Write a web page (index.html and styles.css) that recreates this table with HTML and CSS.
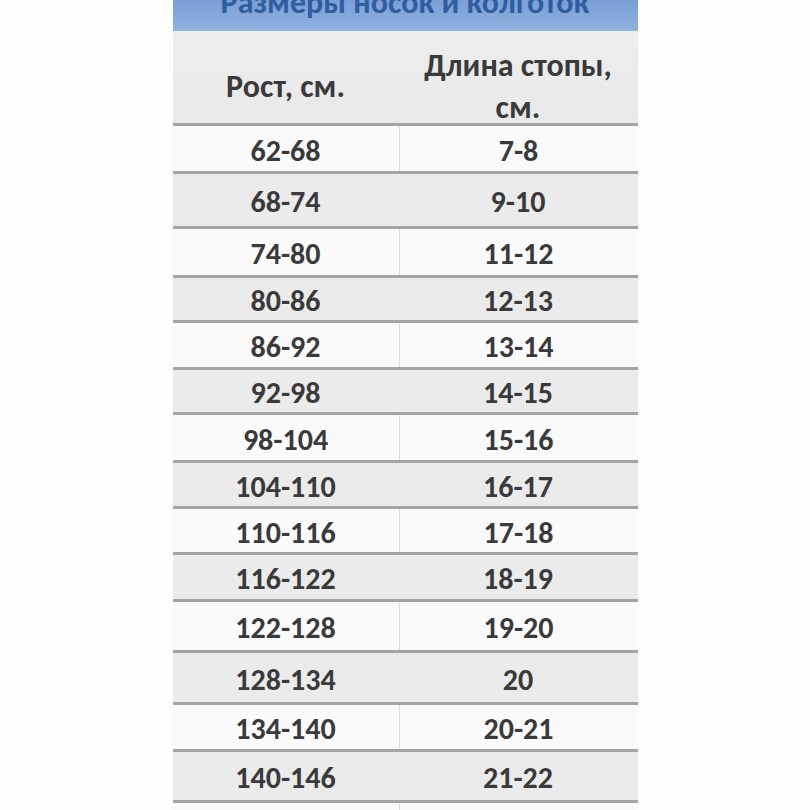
FILE: index.html
```html
<!DOCTYPE html>
<html lang="ru">
<head>
<meta charset="utf-8">
<title>Размеры носок и колготок</title>
<link rel="stylesheet" href="styles.css">
</head>
<body>
<div class="chart">
  <div class="title"><span>Размеры носок и колготок</span></div>
  <div class="row head">
    <div class="cell one">Рост, см.</div>
    <div class="cell two">Длина стопы,<br>см.</div>
  </div>
  <div class="row light"><div class="cell">62-68</div><div class="cell">7-8</div></div>
  <div class="row dark"><div class="cell">68-74</div><div class="cell">9-10</div></div>
  <div class="row light"><div class="cell">74-80</div><div class="cell">11-12</div></div>
  <div class="row dark"><div class="cell">80-86</div><div class="cell">12-13</div></div>
  <div class="row light"><div class="cell">86-92</div><div class="cell">13-14</div></div>
  <div class="row dark"><div class="cell">92-98</div><div class="cell">14-15</div></div>
  <div class="row light"><div class="cell">98-104</div><div class="cell">15-16</div></div>
  <div class="row dark"><div class="cell">104-110</div><div class="cell">16-17</div></div>
  <div class="row light"><div class="cell">110-116</div><div class="cell">17-18</div></div>
  <div class="row dark"><div class="cell">116-122</div><div class="cell">18-19</div></div>
  <div class="row light"><div class="cell">122-128</div><div class="cell">19-20</div></div>
  <div class="row dark"><div class="cell">128-134</div><div class="cell">20</div></div>
  <div class="row light"><div class="cell">134-140</div><div class="cell">20-21</div></div>
  <div class="row dark"><div class="cell">140-146</div><div class="cell">21-22</div></div>
  <div class="row light tail"><div class="cell"></div><div class="cell"></div></div>
</div>
</body>
</html>
```
FILE: styles.css
```css
html, body {
  margin: 0;
  padding: 0;
  background: #fdfdfd;
}

.chart {
  width: 465px;
  margin: 0 auto;
  font-family: Carlito, "Liberation Sans", Arial, sans-serif;
  font-weight: bold;
  color: #3a3a3a;
}

.title {
  height: 31px;
  overflow: hidden;
  display: flex;
  justify-content: center;
  align-items: flex-end;
  background: linear-gradient(#7a9fd6, #92b3e0);
}

.title span {
  font-size: 32px;
  line-height: 32px;
  margin-bottom: 12px;
  color: #2f5d9e;
  white-space: nowrap;
}

.row {
  display: grid;
  grid-template-columns: 226px 1fr;
  border-bottom: 3px solid #a4a4a4;
  font-size: 30px;
}

.cell {
  display: flex;
  align-items: center;
  justify-content: center;
  text-align: center;
  padding-top: 3px;
}

.head {
  height: 92px;
  background: linear-gradient(#ededed, #e9e9e9);
  font-size: 32px;
}

.head .cell.one {
  padding-top: 13px;
}

.head .cell.two {
  line-height: 42px;
  padding-top: 14px;
}

.light {
  background: #fafafa;
}

.light .cell + .cell {
  border-left: 1px solid #dcdcdc;
}

.dark {
  background: #ebebeb;
}

.row:nth-child(3)  { height: 45px; }
.row:nth-child(4)  { height: 52px; }
.row:nth-child(5)  { height: 46px; }
.row:nth-child(6)  { height: 42px; }
.row:nth-child(7)  { height: 44px; }
.row:nth-child(8)  { height: 42px; }
.row:nth-child(9)  { height: 45px; }
.row:nth-child(10) { height: 43px; }
.row:nth-child(11) { height: 43px; }
.row:nth-child(12) { height: 44px; }
.row:nth-child(13) { height: 48px; }
.row:nth-child(14) { height: 49px; }
.row:nth-child(15) { height: 44px; }
.row:nth-child(16) { height: 48px; }

.tail {
  height: 20px;
  border-bottom: none;
}
```
